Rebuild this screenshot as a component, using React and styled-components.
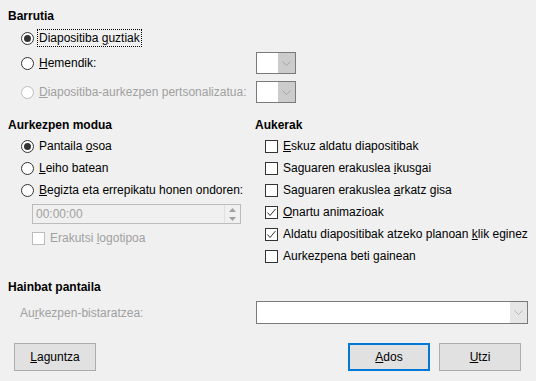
import React from 'react';
import styled, { createGlobalStyle, css } from 'styled-components';

const GlobalStyle = createGlobalStyle`
  html, body {
    margin: 0;
    padding: 0;
    background: #f0f0f0;
  }
  body {
    font-family: "Liberation Sans", Arial, sans-serif;
    font-size: 12px;
    color: #000;
  }
`;

const Dialog = styled.div`
  width: 536px;
  height: 381px;
  box-sizing: border-box;
  padding: 8px 8px 0 8px;
  background: #f0f0f0;
  display: flex;
  flex-direction: column;
`;

const Title = styled.div`
  font-weight: bold;
  height: 16px;
  line-height: 16px;
`;

const Options = styled.div`
  display: flex;
  flex-direction: column;
  padding-left: ${(p) => p.$indent || 13}px;
  margin-top: ${(p) => p.$top || 0}px;
`;

const Row = styled.div`
  display: flex;
  align-items: center;
  height: ${(p) => p.$h || 22}px;
  margin-top: ${(p) => p.$mt || 0}px;
  color: ${(p) => (p.$disabled ? '#a0a0a0' : '#000')};
  white-space: nowrap;
`;

const Radio = styled.span`
  width: 13px;
  height: 13px;
  box-sizing: border-box;
  border-radius: 50%;
  border: 1px solid ${(p) => (p.$disabled ? '#bcbcbc' : '#333')};
  background: #fff;
  display: flex;
  align-items: center;
  justify-content: center;
  margin-right: 3px;
  flex: none;

  ${(p) =>
    p.$checked &&
    css`
      &::after {
        content: '';
        width: 7px;
        height: 7px;
        border-radius: 50%;
        background: #333;
      }
    `}
`;

const CheckBox = styled.span`
  width: 13px;
  height: 13px;
  box-sizing: border-box;
  border: 1px solid ${(p) => (p.$disabled ? '#bcbcbc' : '#333')};
  background: #fff;
  margin-right: 3px;
  flex: none;
  display: flex;
  align-items: center;
  justify-content: center;
`;

const Label = styled.span`
  padding: 1px 1px;
  border: 1px dotted ${(p) => (p.$focus ? '#000' : 'transparent')};
`;

const Spacer = styled.div`
  flex: 1;
`;

const Combo = styled.div`
  width: ${(p) => p.$w}px;
  height: ${(p) => p.$h || 22}px;
  box-sizing: border-box;
  border: 1px solid #7a7a7a;
  background: #fff;
  display: flex;
  justify-content: flex-end;
  flex: none;
  margin-right: ${(p) => p.$mr || 0}px;
`;

const ComboButton = styled.div`
  width: ${(p) => p.$w || 17}px;
  background: ${(p) => p.$bg || '#cccccc'};
  display: flex;
  align-items: center;
  justify-content: center;
`;

const Columns = styled.div`
  display: flex;
  margin-top: 14px;
`;

const Column = styled.div`
  display: flex;
  flex-direction: column;
  width: ${(p) => p.$w}px;
  flex: none;
`;

const SpinBox = styled.div`
  width: 209px;
  height: 20px;
  box-sizing: border-box;
  border: 1px solid #bcbcbc;
  background: #f0f0f0;
  margin: 3px 0 0 11px;
  display: flex;
  align-items: center;
  color: #a0a0a0;
  padding-left: 3px;
`;

const SpinButtons = styled.div`
  margin-left: auto;
  width: 15px;
  height: 18px;
  display: flex;
  flex-direction: column;
  align-items: center;
  justify-content: space-around;
  border-left: 1px solid #e0e0e0;
`;

const Multi = styled.div`
  display: flex;
  flex-direction: column;
  margin-top: 12px;
`;

const MultiRow = styled.div`
  display: flex;
  align-items: center;
  justify-content: space-between;
  padding-left: 12px;
  margin-top: 6px;
  color: #a0a0a0;
`;

const ButtonBar = styled.div`
  display: flex;
  align-items: center;
  margin-top: 19px;
  padding-left: 6px;
  padding-right: 7px;
  gap: 9px;
`;

const Button = styled.button`
  width: 82px;
  height: 28px;
  box-sizing: border-box;
  border: ${(p) => (p.$default ? '2px solid #0078d7' : '1px solid #adadad')};
  background: #e1e1e1;
  font-family: inherit;
  font-size: 12px;
  color: #000;
  padding: 0;
`;

const Chevron = ({ color = '#a6a6a6' }) => (
  <svg width="9" height="5" viewBox="0 0 9 5">
    <path d="M0.5 0.5 L4.5 4.5 L8.5 0.5" fill="none" stroke={color} strokeWidth="1" />
  </svg>
);

const Arrow = ({ up }) => (
  <svg width="7" height="4" viewBox="0 0 7 4">
    <path d={up ? 'M0 4 L3.5 0 L7 4 Z' : 'M0 0 L3.5 4 L7 0 Z'} fill="#a0a0a0" />
  </svg>
);

const Tick = () => (
  <svg width="11" height="11" viewBox="0 0 11 11">
    <path d="M1.5 5.5 L4 8.5 L9.5 2" fill="none" stroke="#333" strokeWidth="1" />
  </svg>
);

const Check = ({ checked, disabled, children }) => (
  <Row $disabled={disabled}>
    <CheckBox $disabled={disabled}>{checked && <Tick />}</CheckBox>
    <Label>{children}</Label>
  </Row>
);

const App = () => (
  <>
    <GlobalStyle />
    <Dialog>
      <Title>Barrutia</Title>
      <Options $top={4}>
        <Row $h={20}>
          <Radio $checked />
          <Label $focus>
            Diapositiba <u>g</u>uztiak
          </Label>
        </Row>
        <Row $mt={4}>
          <Radio />
          <Label>
            <u>H</u>emendik:
          </Label>
          <Spacer />
          <Combo $w={40} $mr={232}>
            <ComboButton>
              <Chevron />
            </ComboButton>
          </Combo>
        </Row>
        <Row $mt={7} $disabled>
          <Radio $disabled />
          <Label>
            <u>D</u>iapositiba-aurkezpen pertsonalizatua:
          </Label>
          <Spacer />
          <Combo $w={40} $mr={232}>
            <ComboButton>
              <Chevron />
            </ComboButton>
          </Combo>
        </Row>
      </Options>

      <Columns>
        <Column $w={247}>
          <Title>Aurkezpen modua</Title>
          <Options $top={2}>
            <Row>
              <Radio $checked />
              <Label>
                Pantaila <u>o</u>soa
              </Label>
            </Row>
            <Row>
              <Radio />
              <Label>
                <u>L</u>eiho batean
              </Label>
            </Row>
            <Row>
              <Radio />
              <Label>
                <u>B</u>egizta eta errepikatu honen ondoren:
              </Label>
            </Row>
            <SpinBox>
              00:00:00
              <SpinButtons>
                <Arrow up />
                <Arrow />
              </SpinButtons>
            </SpinBox>
            <Options $indent={11} $top={3}>
              <Check disabled>
                Erakutsi <u>l</u>ogotipoa
              </Check>
            </Options>
          </Options>
        </Column>
        <Column $w={270}>
          <Title>Aukerak</Title>
          <Options $indent={10} $top={2}>
            <Check>
              <u>E</u>skuz aldatu diapositibak
            </Check>
            <Check>
              Saguaren erakuslea <u>i</u>kusgai
            </Check>
            <Check>
              Saguaren erakuslea <u>a</u>rkatz gisa
            </Check>
            <Check checked>
              <u>O</u>nartu animazioak
            </Check>
            <Check checked>
              Aldatu diapositibak atzeko planoan <u>k</u>lik eginez
            </Check>
            <Check>
              Aurkezpena beti <u>g</u>ainean
            </Check>
          </Options>
        </Column>
      </Columns>

      <Multi>
        <Title>Hainbat pantaila</Title>
        <MultiRow>
          <span>
            Au<u>r</u>kezpen-bistaratzea:
          </span>
          <Combo $w={272} $h={23}>
            <ComboButton $w={17} $bg="#e6e6e6">
              <Chevron color="#b5b5b5" />
            </ComboButton>
          </Combo>
        </MultiRow>
      </Multi>

      <ButtonBar>
        <Button>
          <u>L</u>aguntza
        </Button>
        <Spacer />
        <Button $default>
          <u>A</u>dos
        </Button>
        <Button>
          <u>U</u>tzi
        </Button>
      </ButtonBar>
    </Dialog>
  </>
);

export default App;
